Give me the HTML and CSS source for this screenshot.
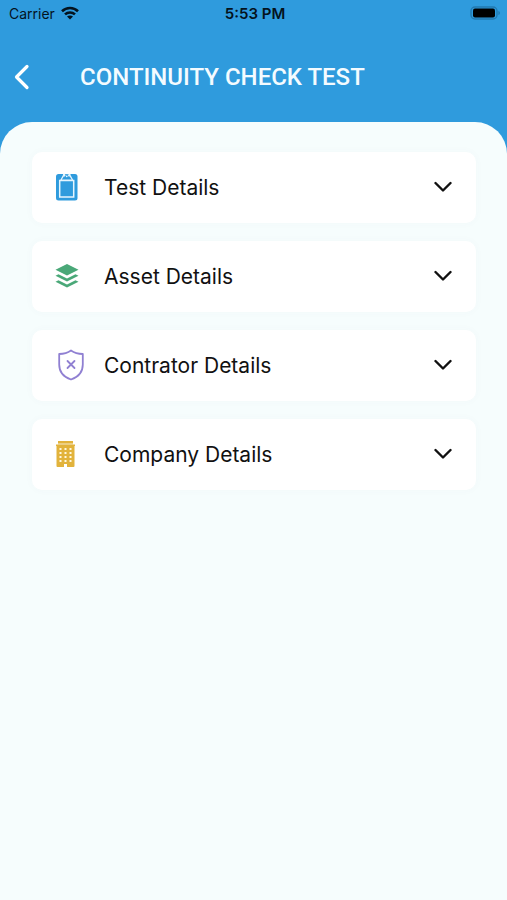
FILE: index.html
```html
<!DOCTYPE html>
<html lang="en">
<head>
<meta charset="utf-8">
<meta name="viewport" content="width=device-width, initial-scale=1">
<title>Continuity Check Test</title>
<link rel="stylesheet" href="styles.css">
</head>
<body>
<div class="status-bar">
  <div class="carrier">Carrier
    <svg width="18" height="14" viewBox="0 0 18 14" aria-hidden="true">
      <g fill="none" stroke="#04131e" stroke-width="2.6">
        <path d="M1 5.2C5.5.9 12.5.9 17 5.2"/>
        <path d="M4 8.4c2.8-2.6 7.2-2.6 10 0"/>
      </g>
      <path fill="#04131e" d="M6 10.6c1.7-1.5 4.3-1.5 6 0L9 13.6z"/>
    </svg>
  </div>
  <div class="clock">5:53 PM</div>
  <svg class="battery" width="31" height="14" viewBox="0 0 31 14" aria-hidden="true">
    <rect x="1" y="1" width="26" height="12" rx="4" fill="none" stroke="#2279b0" stroke-width="1.4"/>
    <rect x="3" y="2.500" width="22" height="9" rx="2" fill="#000"/>
    <path d="M28.400 5c2 .6 2 3.400 0 4z" fill="#2279b0"/>
  </svg>
</div>
<header class="header">
  <button class="back" type="button" aria-label="Back">
    <svg width="16" height="26" viewBox="0 0 16 26" aria-hidden="true"><path d="M13 2.500 2.500 13 13 23.500" fill="none" stroke="#fff" stroke-width="3.200" stroke-linecap="round" stroke-linejoin="round"/></svg>
  </button>
  <h1 class="title">CONTINUITY CHECK TEST</h1>
</header>
<main class="panel">
  <button class="card" type="button" aria-expanded="false">
    <span class="icon">
      <svg width="24" height="28" viewBox="0 0 24 28" aria-hidden="true">
        <rect x="1" y="1" width="21.500" height="26.500" rx="2.500" fill="#2f9bdd"/>
        <path d="M4.700 7.500h14v16.500h-14z" fill="none" stroke="#e6f5fe" stroke-width="1.500"/>
        <path d="M5 7.500 8 2V.8h2v1h3.500v-1h2V2l3 5.500z" fill="#e6f5fe"/>
        <path d="M6.800 6.500 8.800 3.500h1.200a1.900 3.400 0 0 1 3.500 0h1.200L16.700 6.500z" fill="#2f9bdd"/>
        <circle cx="11.750" cy="3.300" r=".9" fill="#e6f5fe"/>
      </svg>
    </span>
    <span class="label">Test Details</span>
    <svg class="chevron" width="18" height="12" viewBox="0 0 18 12" aria-hidden="true"><path d="M1.500 2 9 9.500 16.500 2"/></svg>
  </button>
  <button class="card" type="button" aria-expanded="false">
    <span class="icon">
      <svg width="24" height="24" viewBox="0 0 24 24" fill="#4aa878" aria-hidden="true">
        <path d="M12 0 23.500 5.700 12 11.400.5 5.700z"/>
        <path d="M.5 11.800 3.500 10.300 12 14.500l8.500-4.200 3 1.500L12 17.500z"/>
        <path d="M.5 17.800 3.500 16.300 12 20.500l8.500-4.200 3 1.500L12 23.500z"/>
      </svg>
    </span>
    <span class="label">Asset Details</span>
    <svg class="chevron" width="18" height="12" viewBox="0 0 18 12" aria-hidden="true"><path d="M1.500 2 9 9.500 16.500 2"/></svg>
  </button>
  <button class="card" type="button" aria-expanded="false">
    <span class="icon">
      <svg width="32" height="32" viewBox="0 0 32 32" fill="none" stroke="#9080d2" stroke-width="1.800" stroke-linecap="round" stroke-linejoin="round" aria-hidden="true">
        <path d="M16 1.500C13 3.600 9 4.900 4.200 5v10.500c0 7.500 4.300 12.500 11.800 15 7.500-2.500 11.800-7.500 11.800-15V5C23 4.900 19 3.600 16 1.500z"/>
        <path d="m12.500 12 7 7M19.500 12l-7 7"/>
      </svg>
    </span>
    <span class="label">Contrator Details</span>
    <svg class="chevron" width="18" height="12" viewBox="0 0 18 12" aria-hidden="true"><path d="M1.500 2 9 9.500 16.500 2"/></svg>
  </button>
  <button class="card" type="button" aria-expanded="false">
    <span class="icon">
      <svg width="21" height="26" viewBox="0 0 21 26" aria-hidden="true">
        <path fill="#e2b33c" d="M3 0h15v2.500H3zM1 3.500h19V5h-.5v20a1 1 0 0 1-1 1H12v-3H9v3H2.500a1 1 0 0 1-1-1V5H1z"/>
        <path fill="#e8c468" d="M3 2.500h15v1H3z"/>
        <path fill="#fff8df" d="M4.500 7h2v2h-2zM9.500 7h2v2h-2zM14.500 7h2v2h-2zM4.500 11h2v2h-2zM9.500 11h2v2h-2zM14.500 11h2v2h-2zM4.500 15h2v2h-2zM9.500 15h2v2h-2zM14.500 15h2v2h-2zM4.500 19h2v2h-2zM9.500 19h2v2h-2zM14.500 19h2v2h-2z"/>
      </svg>
    </span>
    <span class="label">Company Details</span>
    <svg class="chevron" width="18" height="12" viewBox="0 0 18 12" aria-hidden="true"><path d="M1.500 2 9 9.500 16.500 2"/></svg>
  </button>
</main>
</body>
</html>
```

FILE: styles.css
```css
* {
  box-sizing: border-box;
}

body {
  margin: 0;
  min-height: 100vh;
  display: flex;
  flex-direction: column;
  background: #2f9bdd;
  font-family: Inter, "Liberation Sans", sans-serif;
}

.status-bar {
  display: grid;
  grid-template-columns: 1fr auto 1fr;
  align-items: center;
  height: 26px;
  padding: 0 6px 0 9px;
  color: #04131e;
  font-size: 14px;
}

.carrier {
  display: flex;
  align-items: center;
  gap: 6px;
}

.clock {
  font-size: 15px;
  font-weight: 600;
}

.battery {
  justify-self: end;
}

.header {
  display: flex;
  align-items: center;
  gap: 50px;
  height: 96px;
  padding: 6px 16px 0 14px;
}

.back {
  display: flex;
  padding: 0;
  border: 0;
  background: none;
}

.title {
  margin: 0;
  color: #f4fbff;
  font-family: Roboto, "Liberation Sans", sans-serif;
  font-size: 24px;
  font-weight: 500;
}

.panel {
  flex: 1;
  display: flex;
  flex-direction: column;
  gap: 18px;
  padding: 30px 31px 30px 32px;
  border-radius: 32px 32px 0 0;
  background: #f6fdfd;
}

.card {
  display: flex;
  align-items: center;
  height: 71px;
  padding: 0 24px 0 23px;
  border: 0;
  border-radius: 10px;
  background: #fff;
  box-shadow: 0 0 8px rgba(90, 90, 140, 0.03);
  color: #111;
  font: inherit;
  font-size: 21px;
  text-align: left;
}

.icon {
  display: flex;
  flex: 0 0 49px;
  margin-bottom: 2px;
}

.label {
  flex: 1;
}

.chevron {
  margin-bottom: 2px;
  fill: none;
  stroke: #111;
  stroke-width: 2.4;
  stroke-linecap: round;
  stroke-linejoin: round;
}
```
